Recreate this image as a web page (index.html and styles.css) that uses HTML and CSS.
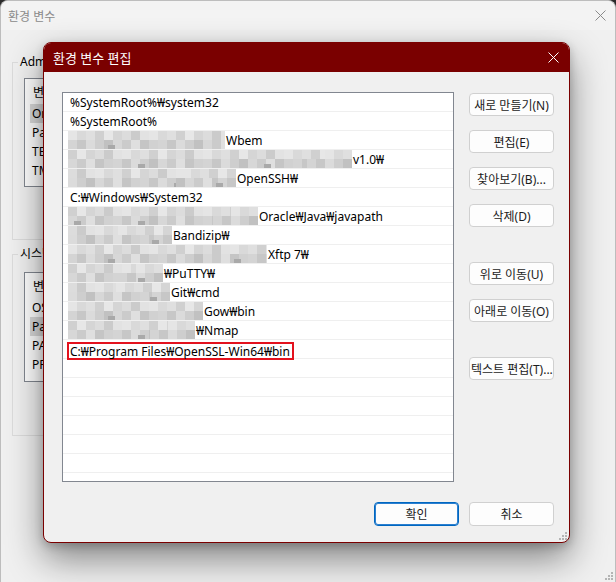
FILE: index.html
```html
<!DOCTYPE html>
<html lang="ko">
<head>
<meta charset="utf-8">
<title>환경 변수 편집</title>
<link rel="stylesheet" href="styles.css">
</head>
<body>
<div class="win">
  <div class="win-title">
    <span class="win-title-text">환경 변수</span>
    <svg class="win-close" width="11" height="11" viewBox="0 0 11 11"><path d="M0.5 0.5L10.5 10.5M10.5 0.5L0.5 10.5" stroke="#8a8a8a" stroke-width="1" fill="none"/></svg>
  </div>
  <div class="win-body">
    <fieldset class="group g1">
      <legend>Administrator에 대한 사용자 변수(U)</legend>
      <div class="vlist">
        <div class="vrow vhead"><span class="vcol">변수</span></div>
        <div class="vrow sel"><span class="vcol">OneDrive</span></div>
        <div class="vrow"><span class="vcol">Path</span></div>
        <div class="vrow"><span class="vcol">TEMP</span></div>
        <div class="vrow"><span class="vcol">TMP</span></div>
      </div>
    </fieldset>
    <fieldset class="group g2">
      <legend>시스템 변수(S)</legend>
      <div class="vlist">
        <div class="vrow vhead"><span class="vcol">변수</span></div>
        <div class="vrow"><span class="vcol">OS</span></div>
        <div class="vrow sel"><span class="vcol">Path</span></div>
        <div class="vrow"><span class="vcol">PATHEXT</span></div>
        <div class="vrow"><span class="vcol">PROCESSOR_ARCHITECTURE</span></div>
      </div>
    </fieldset>
  </div>
  <svg class="grip" width="9" height="9" viewBox="0 0 9 9"><g fill="#b4b4b4"><rect x="7" y="1" width="2" height="2"/><rect x="4" y="4" width="2" height="2"/><rect x="7" y="4" width="2" height="2"/><rect x="1" y="7" width="2" height="2"/><rect x="4" y="7" width="2" height="2"/><rect x="7" y="7" width="2" height="2"/></g></svg>
</div>

<div class="dlg">
  <div class="dlg-title">
    <span class="dlg-title-text">환경 변수 편집</span>
    <svg class="dlg-close" width="11" height="11" viewBox="0 0 11 11"><path d="M0.5 0.5L10.5 10.5M10.5 0.5L0.5 10.5" stroke="#ffffff" stroke-width="1" fill="none"/></svg>
  </div>
  <div class="dlg-body">
    <div class="plist">
      <div class="prow"><span class="ptxt">%SystemRoot%₩system32</span></div>
      <div class="prow"><span class="ptxt">%SystemRoot%</span></div>
      <div class="prow"><span class="blur" style="width:157px"></span><span class="tail">Wbem</span></div>
      <div class="prow"><span class="blur v2" style="width:284px"></span><span class="tail">v1.0₩</span></div>
      <div class="prow"><span class="blur v3" style="width:168px"></span><span class="tail">OpenSSH₩</span></div>
      <div class="prow"><span class="ptxt">C:₩Windows₩System32</span></div>
      <div class="prow"><span class="blur v2" style="width:190px"></span><span class="tail">Oracle₩Java₩javapath</span></div>
      <div class="prow"><span class="blur v3" style="width:104px"></span><span class="tail">Bandizip₩</span></div>
      <div class="prow"><span class="blur" style="width:199px"></span><span class="tail">Xftp 7₩</span></div>
      <div class="prow"><span class="blur v2" style="width:95px"></span><span class="tail">₩PuTTY₩</span></div>
      <div class="prow"><span class="blur v3" style="width:102px"></span><span class="tail">Git₩cmd</span></div>
      <div class="prow"><span class="blur" style="width:135px"></span><span class="tail">Gow₩bin</span></div>
      <div class="prow"><span class="blur v2" style="width:127px"></span><span class="tail">₩Nmap</span></div>
      <div class="prow"><span class="mark">C:₩Program Files₩OpenSSL-Win64₩bin</span></div>
      <div class="prow"></div>
      <div class="prow"></div>
      <div class="prow"></div>
      <div class="prow"></div>
      <div class="prow"></div>
      <div class="prow"></div>
    </div>
    <div class="side">
      <button class="btn first">새로 만들기(N)</button>
      <button class="btn">편집(E)</button>
      <button class="btn">찾아보기(B)...</button>
      <button class="btn">삭제(D)</button>
      <button class="btn big">위로 이동(U)</button>
      <button class="btn">아래로 이동(O)</button>
      <button class="btn big over">텍스트 편집(T)...</button>
    </div>
    <div class="foot">
      <button class="btn ok">확인</button>
      <button class="btn">취소</button>
    </div>
  </div>
  <svg class="grip" width="9" height="9" viewBox="0 0 9 9"><g fill="#b4b4b4"><rect x="7" y="1" width="2" height="2"/><rect x="4" y="4" width="2" height="2"/><rect x="7" y="4" width="2" height="2"/><rect x="1" y="7" width="2" height="2"/><rect x="4" y="7" width="2" height="2"/><rect x="7" y="7" width="2" height="2"/></g></svg>
</div>
</body>
</html>
```

FILE: styles.css
```css
* { box-sizing: border-box; }
html, body { margin: 0; padding: 0; }
body {
  width: 616px;
  height: 582px;
  overflow: hidden;
  position: relative;
  background: #2b2b2b;
  font-family: "Noto Sans", "Noto Sans CJK KR", sans-serif;
  font-size: 12px;
  color: #000;
}

/* outer window */
.win {
  position: relative;
  width: 616px;
  height: 582px;
  background: #f0f0f0;
  border: 1px solid #bdbdbd;
  border-bottom: none;
  border-radius: 8px 8px 0 0;
  overflow: hidden;
}
.win-title {
  height: 29px;
  background: #f3f3f3;
  display: flex;
  align-items: center;
  justify-content: space-between;
  padding: 0 9px 0 7px;
}
.win-title-text { color: #8a8a8a; font-size: 12px; }
.win-body { padding: 24px 0 0 11px; }

/* group boxes: only their left part shows beside the edit dialog */
.group {
  margin: 0;
  width: 44px;
  min-width: 0;
  border: 1px solid #dcdcdc;
  border-right: none;
  padding: 0 0 0 11px;
  overflow: hidden;
}
.group legend {
  margin-left: -6px;
  padding: 0 0 0 2px;
  line-height: 16px;
  height: 16px;
  max-width: 100%;
  overflow: hidden;
  white-space: nowrap;
}
.g1 { padding-top: 8px; padding-bottom: 52px; }
.g2 { margin-top: 6px; padding-top: 10px; padding-bottom: 53px; }

.vlist {
  background: #fff;
  border: 1px solid #828790;
  border-right: none;
  overflow: hidden;
  padding: 0 0 0 5px;
}
.g1 .vlist { height: 109px; }
.g2 .vlist { height: 110px; }
.vrow {
  height: 19px;
  display: flex;
  align-items: center;
  padding-left: 2px;
  white-space: nowrap;
  overflow: hidden;
}
.vrow.vhead { height: 25px; padding-left: 3px; }
.vrow.sel { background: #d9d9d9; }

/* edit dialog */
.dlg {
  position: absolute;
  left: 43px;
  top: 42px;
  width: 527px;
  height: 501px;
  background: #f0f0f0;
  border: 1px solid #7a0000;
  border-radius: 8px;
  box-shadow: 0 16px 36px rgba(0, 0, 0, 0.45), 0 3px 10px rgba(0, 0, 0, 0.2);
  overflow: hidden;
}
.dlg-title {
  height: 29px;
  background: #7a0000;
  display: flex;
  align-items: center;
  justify-content: space-between;
  padding: 0 10px 0 9px;
  color: #fff;
}
.dlg-title-text { font-size: 13px; }
.dlg-body {
  display: grid;
  grid-template-columns: 392px 85px;
  column-gap: 15px;
  padding: 20px 15px 0 18px;
}

.plist {
  height: 390px;
  background: #fff;
  border: 1px solid #828790;
  overflow: hidden;
}
.prow {
  height: 19px;
  border-bottom: 1px solid #efefef;
  display: flex;
  align-items: center;
  padding-left: 5px;
  white-space: nowrap;
}
.ptxt { margin-left: 2px; }
.tail { margin-left: 1px; }

.blur {
  height: 18px;
  flex: none;
  background-image:
    repeating-linear-gradient(90deg, transparent 0 40px, #a9a9a9 40px 47px, transparent 47px 126px),
    repeating-linear-gradient(90deg, #e5e5e5 0 9px, #d9d9d9 9px 18px, #dfdfdf 18px 27px, #d0d0d0 27px 36px, #e7e7e7 36px 45px, #d5d5d5 45px 54px, #dcdcdc 54px 63px, #cbcbcb 63px 72px, #e2e2e2 72px 81px),
    repeating-linear-gradient(90deg, #d4d4d4 0 9px, #c7c7c7 9px 18px, #dbdbdb 18px 27px, #cecece 27px 36px, #c1c1c1 36px 45px, #d7d7d7 45px 54px, #cbcbcb 54px 63px, #dfdfdf 63px 72px, #c5c5c5 72px 81px, #d1d1d1 81px 90px);
  background-size: 100% 4px, 100% 9px, 100% 9px;
  background-position: 0 14px, 0 0, 0 9px;
  background-repeat: repeat-x;
}
.blur.v2 { background-position: 30px 14px, -27px 0, -45px 9px; }
.blur.v3 { background-position: -60px 14px, -54px 0, -18px 9px; }

.mark {
  display: flex;
  align-items: center;
  height: 18px;
  margin-top: 4px;
  margin-left: -1px;
  padding: 0 2px 0 1px;
  border: 2px solid #e3121e;
}

.side { display: flex; flex-direction: column; }
.btn {
  width: 85px;
  height: 23px;
  margin: 14px 0 0;
  padding: 0;
  background: #fdfdfd;
  border: 1px solid #d0d0d0;
  border-radius: 4px;
  font-family: inherit;
  font-size: 12px;
  color: #1b1b1b;
  display: flex;
  align-items: center;
  justify-content: center;
  white-space: nowrap;
}
.btn.first { margin-top: 1px; }
.btn.big { margin-top: 35px; }
.btn.over { justify-content: flex-start; padding-left: 1px; }

.foot {
  grid-column: 1 / -1;
  display: flex;
  justify-content: flex-end;
  gap: 10px;
  margin-top: 20px;
}
.foot .btn { margin: 0; height: 24px; }
.btn.ok { border-color: #0067c0; box-shadow: inset 0 0 0 1px #2b7fd0; }

.grip { position: absolute; right: 2px; bottom: 2px; }
```
